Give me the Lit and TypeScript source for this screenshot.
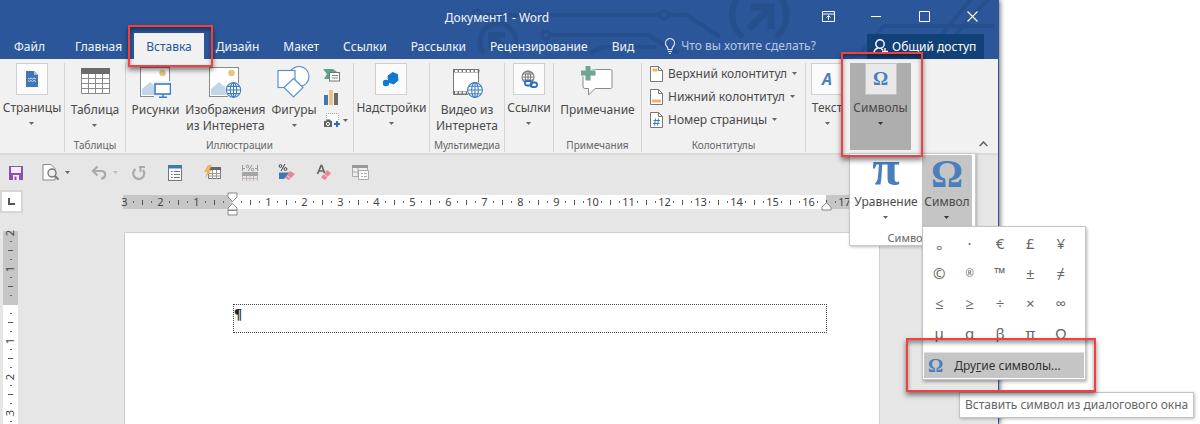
import { LitElement, html, svg, css } from "lit";
import { customElement } from "lit/decorators.js";

const globe = (x: number, y: number, r: number, c: string, fill = "#fff") => svg`
  <g transform="translate(${x} ${y})" fill="none" stroke=${c} stroke-width="1.1">
    <circle r=${r} fill=${fill}></circle>
    <ellipse rx=${r * 0.45} ry=${r}></ellipse>
    <path d="M${-r} 0H${r}M0 ${-r}V${r}M${-r * 0.85} ${-r * 0.5}H${r * 0.85}M${-r * 0.85} ${r * 0.5}H${r * 0.85}"></path>
  </g>`;

const photo = svg`
  <rect x="1.5" y="1.5" width="29" height="29" fill="#fff" stroke="#8a8a8a"></rect>
  <circle cx="23.500" cy="7" r="3.200" fill="#eac282"></circle>
  <path d="M3 29v-6l8-7 8 7v6z" fill="#c3d5e8"></path>`;

const pageShape = svg`<path d="M.5 .5H8.500L12.500 4.500V15.500H.5Z" fill="#fff" stroke="#777"></path><path d="M8.500 .5V4.500H12.500" fill="none" stroke="#777"></path>`;

const icon = (w: number, h: number, body: unknown) =>
  html`<svg class="ic" width=${w} height=${h} viewBox="0 0 ${w} ${h}" aria-hidden="true">${body}</svg>`;

const icons = {
  pages: icon(16, 18, svg`<path d="M2 1h8l4 4v12H2z" fill="#3f78b5"></path><path d="M10 1v4h4z" fill="#9fbfe0"></path><path d="M4 8l1.500 1L7 8l1.500 1L10 8l2 1M4 10.500l1.500 1 1.500-1 1.500 1 1.500-1 2 1" stroke="#cfe0f1" fill="none"></path>`),
  table: icon(32, 32, svg`<rect x="2" y="2" width="29" height="26" fill="#fff"></rect><path d="M2.500 2v25.500h28V2M2.500 12.500h28M2.500 17.500h28M2.500 22.500h28M9.500 7v21M16.500 7v21M23.500 7v21" fill="none" stroke="#8a8a8a"></path><rect x="2" y="2" width="29" height="6" fill="#6b6b6b"></rect>`),
  pictures: icon(32, 32, svg`${photo}<rect x="15" y="15" width="17" height="17" fill="#f1f1f1"></rect><rect x="16" y="18" width="15.500" height="10" fill="#fff" stroke="#3f7cbf" stroke-width="1.600"></rect><path d="M24 28v3M20 31.200h8" stroke="#3f7cbf" stroke-width="1.400"></path>`),
  online: icon(34, 32, svg`${photo}<circle cx="25.500" cy="24" r="8.500" fill="#f1f1f1"></circle>${globe(25.5, 24, 7.2, "#3f7cbf")}`),
  shapes: icon(34, 32, svg`<g fill="#fff" stroke="#5b92cd" stroke-width="1.200"><circle cx="22" cy="10.500" r="10"></circle><rect x="1" y="4.500" width="17" height="17"></rect><path d="M16.500 12.500l9.500 9-9.500 9.500-9.500-9.500z"></path></g>`),
  smartart: icon(18, 14, svg`<path d="M0 1h10l4 3-3 3H7v4H1l3-5z" fill="#5ba389"></path><rect x="6.500" y="4.500" width="10" height="8.500" fill="#fff" stroke="#777"></rect><path d="M9 7.500h6M9 10h6" stroke="#888"></path>`),
  chart: icon(18, 15, svg`<path d="M1 5h4v10H1z" fill="#3f78b5"></path><path d="M6 0h4v15H6z" fill="#eac282"></path><path d="M11 3h4v12h-4z" fill="#6b6b6b"></path>`),
  shot: icon(18, 15, svg`<path d="M3.500 7V.5h12V8" fill="#fafafa" stroke="#aaa" stroke-dasharray="1 1"></path><path d="M1 8h2l1-1.500h3L8 8h1v6H1z" fill="#606060"></path><circle cx="5" cy="11" r="1.600" fill="#606060" stroke="#fff"></circle><path d="M14 8v6M11 11h6" stroke="#2f6cb5" stroke-width="2"></path>`),
  addins: icon(18, 18, svg`<path d="M10.500 2.500l5 2 .5 6-4.500 3.500-5-2-.5-6z" fill="#0f78d0" stroke="#0f78d0" stroke-linejoin="round"></path><circle cx="4" cy="13" r="3.200" fill="#0f78d0"></circle>`),
  video: icon(32, 32, svg`<rect x="2.500" y="3.500" width="25" height="25" fill="#fff" stroke="#777"></rect><path d="M2.500 5h26M2.500 26.500h14" stroke="#777" stroke-width="3"></path><path d="M4 5h24M4 26.500h13" stroke="#fff" stroke-width="2" stroke-dasharray="2.600 1.400"></path><circle cx="24" cy="24" r="8.500" fill="#f1f1f1"></circle>${globe(24, 24, 7.4, "#3f7cbf")}`),
  links: icon(18, 18, svg`${globe(8, 7, 6, "#7a7a7a")}<g fill="none" stroke="#2f6fb8" stroke-width="1.800"><rect x="5" y="11" width="7" height="4.500" rx="2.200" fill="#fff"></rect><rect x="10.500" y="12.500" width="6.500" height="4.500" rx="2.200"></rect></g>`),
  comment: icon(34, 32, svg`<path d="M5 3.500h24.500q1.500 0 1.500 1.500v16q0 1.500-1.500 1.500H14l-6.500 6.500v-6.500H4q-2 0-2-2V6" fill="#fff" stroke="#8a8a8a"></path><path d="M7 0v14.500M0 7h14.500" stroke="#f1f1f1" stroke-width="7"></path><path d="M7 0v14.500M0 7h14.500" stroke="#6ea693" stroke-width="5"></path>`),
  top: icon(13, 16, svg`${pageShape}<path d="M2.500 2.500h5v3h-5z" fill="#eab56a"></path>`),
  bottom: icon(13, 16, svg`${pageShape}<path d="M2 10.500h9v3H2z" fill="#eab56a"></path>`),
  number: icon(13, 16, svg`${pageShape}<path d="M5.500 6.500l-1 7M8.500 6.500l-1 7M3.500 8.500h6.500M3 11.500h6.500" stroke="#3f7cbf" fill="none"></path>`),
  textA: html`<span class="glyph it">A</span>`,
  omega: html`<span class="glyph">Ω</span>`,
  save: icon(16, 16, svg`<path d="M1 1h14v14H1z" fill="#8a52ad"></path><path d="M3 2h10v6H3zM5 10h6v5H5z" fill="#f3edf7"></path><path d="M6.500 11.500h2V15h-2z" fill="#8a52ad"></path>`),
  preview: icon(18, 17, svg`<path d="M1 .5h8l4 4V16H1z" fill="#fff" stroke="#888"></path><circle cx="10" cy="9" r="4" fill="#eee" stroke="#777" stroke-width="1.400"></circle><path d="M13 12l3.500 3.500" stroke="#777" stroke-width="2"></path>`),
  undo: icon(17, 16, svg`<path d="M2 6h9q4 1 3 5-1 2.500-4 2.500" fill="none" stroke="#aaa" stroke-width="2.200"></path><path d="M6.500 1.500L2 6l4.500 4.500" fill="none" stroke="#aaa" stroke-width="2.200"></path>`),
  redo: icon(16, 16, svg`<path d="M4.500 4A5.500 5.500 0 1 0 12 5" fill="none" stroke="#aaa" stroke-width="2.200"></path><path d="M8 2h6M9.500 2v5" stroke="#aaa" stroke-width="2"></path>`),
  list: icon(15, 16, svg`<rect x=".5" y=".5" width="13" height="15" fill="#fff" stroke="#777"></rect><path d="M0 0h14v3.500H0z" fill="#3f78b5"></path><path d="M3 6.500h1.500M3 9.500h1.500M3 12.500h1.500M6 6.500h6M6 9.500h6M6 12.500h6" stroke="#777"></path>`),
  quick: icon(18, 16, svg`<path d="M4.500 2.500h12v11h-12z" fill="#fff" stroke="#777"></path><path d="M4 2h13v3H4z" fill="#666"></path><path d="M8.500 5v9M12.500 5v9M4 8.500h13M4 11h13" stroke="#999"></path><path d="M4 0h4L5.500 5H8L1 13 3 7H0z" fill="#ecb55e"></path>`),
  percent: icon(16, 18, svg`<g fill="none" stroke="#999"><path d="M10 1L6 7"></path><circle cx="5.500" cy="2.500" r="1.300"></circle><circle cx="10.500" cy="5.500" r="1.300"></circle><path d="M.5 1v6M15.500 1v6M1 4.500h2M13 4.500h2"></path></g><path d="M0 8h16v4H0z" fill="#a5a5a5"></path><path d="M.5 12v5M4.500 12v5M8 12v5M11.500 12v5M15.500 12v5M0 14.500h16" stroke="#c3b3be"></path>`),
  clearPct: icon(18, 17, svg`<g fill="none" stroke="#444"><path d="M7 0L3 7"></path><circle cx="2.500" cy="2" r="1.400"></circle><circle cx="7.500" cy="5" r="1.400"></circle></g><path d="M1 8.500h11l-6 6.500H1z" fill="#3f78b5"></path><path d="M12 7l5 3-6 6-4-2z" fill="#e8879a"></path><path d="M9 11.500l3.500 3" stroke="#fbd7de"></path>`),
  clearA: icon(16, 17, svg`<path d="M1.500 10L5 1.500h.8L8.500 9M3 7h5" fill="none" stroke="#666" stroke-width="1.700"></path><path d="M11 6l4 3-6 7-4-2.500z" fill="#e8879a"></path><path d="M8 10l3.500 3" stroke="#fbd7de"></path>`),
  form: icon(17, 17, svg`<path d="M.5 1.500h15v11H.5z" fill="#eee" stroke="#aaa"></path><path d="M0 1h16v3H0z" fill="#999"></path><path d="M1 8h6M6 4v8" stroke="#aaa"></path><path d="M6.500 6.500h10v9h-10z" fill="#fafafa" stroke="#aaa"></path><path d="M9 9.500h2M12 9.500h3M9 12.500h2M12 12.500h3" stroke="#aaa"></path>`),
};

const arrow = html`<svg class="arrow" width="5" height="3" viewBox="0 0 5 3" aria-hidden="true"><path d="M0 0h5L2.500 3z" fill="currentColor"></path></svg>`;

const RULER_UNIT = 4;
const rulerCells = (from: number, to: number) => {
  const cells: string[] = [];
  for (let i = from * RULER_UNIT; i <= to * RULER_UNIT; i++) {
    const rest = Math.abs(i % RULER_UNIT);
    cells.push(rest === 2 ? "|" : rest ? "·" : i === 0 ? "" : String(Math.abs(i / RULER_UNIT)));
  }
  return cells.map((c) =>
    c === "|" ? html`<i class="tick"></i>` : c === "·" ? html`<i class="dot"></i>` : html`<i class="num"><b>${c}</b></i>`);
};

const SYMBOLS = "ₒ·€£¥©®™±≠≤≥÷×∞μαβπΩ".split("");

@customElement("app-root")
export class AppRoot extends LitElement {
  static styles = css`
    :host { display: block; font: 12px/16px "Noto Sans", "Open Sans", sans-serif; color: #4a4a4a; background: #fff; height: 100vh; overflow: hidden; }
    * { box-sizing: border-box; }
    button, input { font: inherit; color: inherit; background: none; border: 0; padding: 0; margin: 0; }
    button { white-space: nowrap; }
    svg { display: block; flex: none; }
    .desktop { height: 100%; padding-right: 201px; }
    .window { position: relative; height: 100%; display: flex; flex-direction: column; background: #e6e6e6; border-right: 1px solid #2b579a; box-shadow: 1px 0 5px rgba(0, 0, 0, .6); }
    header { position: relative; background: #2b579a; color: #f2f5fa; height: 59px; }
    .circuit { position: absolute; top: 0; right: 0; width: 536px; height: 59px; }
    .titlebar { position: relative; display: flex; align-items: center; height: 33px; }
    .title { flex: 1; margin: 0; padding: 2px 0 0 190px; font: inherit; text-align: center; }
    .controls { display: flex; padding-right: 2px; }
    .controls button { width: 48px; height: 30px; display: grid; place-items: center; }
    .tabs { position: relative; display: flex; align-items: stretch; height: 26px; padding-left: 2px; }
    .tab { padding: 2px 12px 0; height: 26px; position: relative; }
    .tab.file { margin-right: 6px; }
    .tab.on { background: #f1f1f1; color: #2b579a; z-index: 3; }
    .tell { display: flex; align-items: center; gap: 5px; margin-left: 18px; flex: 1; min-width: 0; }
    .tell input { flex: 1; min-width: 0; outline: 0; }
    .tell input::placeholder { color: #b9c8e0; opacity: 1; }
    .share { display: flex; align-items: center; gap: 4px; flex: 0 0 117px; margin: 1px 14px 0 0; padding-left: 6px; background: #124078; color: #fff; }
    .mark { position: absolute; border: 2px solid #f43f3f; box-shadow: 0 3px 5px rgba(0, 0, 0, .5), inset 0 3px 4px rgba(0, 0, 0, .4); pointer-events: none; }
    .mark.tabmark { left: -6px; right: -9px; top: -8px; height: 42px; z-index: 4; }
    .mark.symmark { left: -9px; right: -12px; top: -11px; height: 105px; z-index: 6; }
    .mark.moremark { left: -18px; right: -12px; top: -15px; height: 54px; z-index: 6; }

    .ribbon { display: grid; grid-template-columns: 65px 61px 228px 76px 75px 49px 88px 164px 1fr; height: 96px; background: #f1f1f1; border-bottom: 2px solid #dadada; padding-top: 4px; }
    .group { display: flex; flex-direction: column; border-right: 1px solid #d5d5d5; margin-bottom: 1px; min-width: 0; }
    .items { flex: 1; display: flex; justify-content: center; gap: 6px; }
    .caption { font-size: 10px; line-height: 14px; text-align: center; color: #666; white-space: nowrap; }
    .big { display: flex; flex-direction: column; align-items: center; padding-top: 3px; gap: 4px; align-self: flex-start; }
    .big.boxed { padding-top: 0; gap: 5px; }
    .box { width: 32px; height: 32px; display: grid; place-items: center; background: #fbfbfb; border: 1px solid #d0d0d0; }
    .lbl { display: flex; flex-direction: column; align-items: center; }
    .lbl .arrow { margin-top: 6px; }
    .arrow { color: #666; }
    .glyph { font: bold 19px/24px "Liberation Serif", serif; color: #4a7fbc; }
    .glyph.it { font: italic bold 16px/24px "Noto Sans", sans-serif; }
    .minis { display: flex; flex-direction: column; }
    .minis button { display: flex; align-items: center; height: 23px; gap: 2px; }
    .rows { flex: 1; display: flex; flex-direction: column; align-items: flex-start; padding: 0 0 0 8px; margin-top: -1px; }
    .rows button { display: flex; align-items: center; gap: 5px; height: 23px; }
    .final { display: flex; height: 87px; padding-left: 5px; gap: 7px; }
    .textbtn { width: 32px; }
    .textbtn .boxed { width: 100%; }
    .symwrap { position: relative; width: 61px; background: #aeaeae; }
    .symwrap > .boxed { width: 100%; }
    .symwrap .box { background: #e9e9e9; border-color: #c6c6c6; }
    .symwrap > .boxed .arrow, .cell.on .arrow { color: #333; }
    .collapse { margin: auto 10px 0 auto; height: 12px; }

    .panel { position: absolute; left: -1px; top: 90px; width: 127px; height: 93px; background: #fff; border: 1px solid #c8c8c8; box-shadow: 1px 1px 3px rgba(0, 0, 0, .25); z-index: 5; padding-top: 1px; }
    .pair { display: flex; }
    .cell { height: 72px; flex: 0 0 72px; display: flex; flex-direction: column; align-items: center; }
    .cell.on { flex-basis: 50px; background: #c5c5c5; }
    .huge { font: bold 50px/26px "Liberation Serif", serif; color: #4a7fbc; height: 39px; }
    .huge.om { font-size: 40px; line-height: 38px; }
    .panel .caption { font-size: 11px; padding-top: 4px; }
    .menu { position: absolute; left: 72px; top: 72px; width: 164px; height: 154px; background: #fff; border: 1px solid #c4c4c4; box-shadow: 1px 2px 3px rgba(0, 0, 0, .3); }
    .grid { display: grid; grid-template-columns: repeat(5, 1fr); grid-auto-rows: 30px; height: 115px; overflow: hidden; padding: 1px 9px 0 1px; font-size: 15px; }
    .grid button { text-align: center; color: #666; }
    .grid .small { font-size: 10px; }
    .more { position: relative; margin: 10px 1px 1px 1px; border-top: 1px solid #e2e2e2; }
    .more button { display: flex; align-items: center; gap: 11px; width: 100%; height: 25px; padding-left: 4px; background: #c5c5c5; color: #333; }
    .tip { position: absolute; left: 36px; top: 165px; border: 1px solid #c4c4c4; background: #fff; padding: 4px 5px; white-space: nowrap; color: #666; box-shadow: 1px 1px 3px rgba(0, 0, 0, .25); }

    .qat { display: flex; align-items: center; height: 35px; padding-left: 8px; }
    .qat button { height: 24px; display: grid; place-items: center; }
    .qat .t { width: 37px; }
    .qat .n { width: 16px; }
    .qat .m { width: 24px; margin-left: 15px; }
    .qat .m + .n { width: 9px; }
    .faint .arrow { color: #bbb; }
    .rulerrow { display: flex; height: 24px; }
    .corner { flex: none; width: 23px; height: 23px; border: 2px solid #d6d6d6; background: #fff; display: grid; place-items: center; margin-right: 97px; }
    .corner i { width: 7px; height: 7px; border: solid #555; border-width: 0 0 2px 2px; }
    .ruler { position: relative; flex: 0 1 760px; display: flex; height: 14px; margin-top: 5px; background: linear-gradient(to right, transparent 3px, #c6c6c6 3px 112px, #fff 112px 706px, #c6c6c6 706px); }
    .ruler i, .vruler i { flex: none; width: 9px; height: 100%; display: flex; align-items: center; justify-content: center; font-style: normal; }
    .ruler b, .vruler b { font: 11px/14px "Noto Sans", sans-serif; color: #444; }
    .dot::before { content: ""; width: 1px; height: 2px; background: #666; }
    .tick::before { content: ""; width: 1px; height: 5px; background: #555; }
    .knob { position: absolute; }
    .knob.l { left: 107px; top: -3px; }
    .knob.r { left: 701px; top: 7px; }
    .work { flex: 1; min-height: 0; display: flex; overflow: hidden; padding-top: 14px; }
    .vruler { width: 15px; margin: 0 106px 0 3px; overflow: hidden; background: linear-gradient(to bottom, transparent 3px, #c6c6c6 3px 77px, #fff 77px); }
    .vruler i { width: 15px; height: 9px; }
    .vruler b { transform: rotate(-90deg); }
    .vruler .dot::before { width: 2px; height: 1px; }
    .vruler .tick::before { width: 5px; height: 1px; }
    .sheet { flex: 0 1 756px; margin-top: 4px; background: #fff; border: solid #cfcfcf; border-width: 1px 1px 0; padding: 71px 52px 0 108px; }
    .para { height: 29px; margin: 0; border: 1px dotted #444; font: bold 15px/18px "Liberation Serif", serif; color: #222; }
  `;

  private big(ic: unknown, lines: string[], drop = false, boxed = false) {
    return html`<button class="big ${boxed ? "boxed" : ""}">
      ${boxed ? html`<span class="box">${ic}</span>` : ic}
      <span class="lbl">${lines.map((l) => html`<span>${l}</span>`)}${drop ? arrow : ""}</span>
    </button>`;
  }

  private group(caption: string, body: unknown) {
    return html`<section class="group"><div class="items">${body}</div><div class="caption">${caption}</div></section>`;
  }

  private header() {
    return html`<header>
      <svg class="circuit" viewBox="0 0 536 59" aria-hidden="true">
        <g fill="none" stroke="#254f8d" stroke-width="4">
          <circle cx="15" cy="14" r="4" stroke-width="3"></circle><path d="M20 15H197M206 15H225L258 37"></path>
          <circle cx="202" cy="15" r="4" stroke-width="3"></circle>
          <circle cx="84" cy="35" r="4" stroke-width="3"></circle><path d="M89 35H186L216 53M128 53L141 47H195"></path>
          <path d="M22 53A18 18 0 1 1 50 53" stroke-width="5"></path><path d="M29 50V35H43M30 36L46 51" stroke-width="6"></path>
          <path d="M281 37A28 28 0 0 1 282 -8M312 -8A28 28 0 0 1 314 37" stroke-width="6"></path>
          <path d="M289 7H309V29M308 8L287 29" stroke-width="7"></path>
          <path d="M400 51L422 26H532M480 34L510 -2M494 34L527 -2"></path>
        </g>
      </svg>
      <div class="titlebar">
        <h1 class="title">Документ1 - Word</h1>
        <div class="controls">
          <button aria-label="Параметры ленты">${icon(13, 11, svg`<path d="M.5 .5h12v10H.5zM.5 3h12M6.500 9V5M4.500 6.500l2-2 2 2" fill="none" stroke="#fff"></path>`)}</button>
          <button aria-label="Свернуть">${icon(10, 11, svg`<path d="M0 5.500h10" stroke="#fff"></path>`)}</button>
          <button aria-label="Развернуть">${icon(11, 11, svg`<path d="M.5 .5h10v10H.5z" fill="none" stroke="#fff"></path>`)}</button>
          <button aria-label="Закрыть">${icon(11, 11, svg`<path d="M.5 .5l10 10M10.500 .5l-10 10" stroke="#fff" stroke-width="1.200"></path>`)}</button>
        </div>
      </div>
      <nav class="tabs">
        <button class="tab file">Файл</button>
        <button class="tab">Главная</button>
        <button class="tab on">Вставка<span class="mark tabmark"></span></button>
        ${["Дизайн", "Макет", "Ссылки", "Рассылки", "Рецензирование", "Вид"].map((t) => html`<button class="tab">${t}</button>`)}
        <label class="tell">
          ${icon(12, 16, svg`<path d="M4 11.500Q4 9.500 2.500 8A4.500 4.500 0 1 1 9.500 8Q8 9.500 8 11.500zM4 13.500h4M5 15.500h2" fill="none" stroke="#dfe7f3" stroke-width="1.200"></path>`)}
          <input type="text" aria-label="Что вы хотите сделать?" placeholder="Что вы хотите сделать?">
        </label>
        <button class="share">${icon(15, 16, svg`<g fill="none" stroke="#fff" stroke-width="1.400"><circle cx="7" cy="5" r="4.200"></circle><path d="M.7 15Q1 10 5 9M8 9.500L10 11M12 9v6M9 12.500h6"></path></g>`)}Общий доступ</button>
      </nav>
    </header>`;
  }

  private symbols() {
    return html`<div class="symwrap">
      ${this.big(icons.omega, ["Символы"], true, true)}
      <div class="panel">
        <div class="pair">
          <button class="cell"><span class="huge">π</span><span class="lbl"><span>Уравнение</span>${arrow}</span></button>
          <button class="cell on"><span class="huge om">Ω</span><span class="lbl"><span>Символ</span>${arrow}</span></button>
        </div>
        <div class="caption">Символы</div>
        <div class="menu">
          <div class="grid">${SYMBOLS.map((s) => html`<button class=${s === "®" ? "small" : ""}>${s}</button>`)}</div>
          <div class="more">
            <button>${icons.omega}<span>Дру<u>г</u>ие символы...</span></button>
            <span class="mark moremark"></span>
          </div>
          <div class="tip" role="tooltip">Вставить символ из диалогового окна</div>
        </div>
      </div>
      <span class="mark symmark"></span>
    </div>`;
  }

  private ribbon() {
    return html`<div class="ribbon">
      ${this.group("", this.big(icons.pages, ["Страницы"], true, true))}
      ${this.group("Таблицы", this.big(icons.table, ["Таблица"], true))}
      ${this.group("Иллюстрации", html`
        ${this.big(icons.pictures, ["Рисунки"])}
        ${this.big(icons.online, ["Изображения", "из Интернета"])}
        ${this.big(icons.shapes, ["Фигуры"], true)}
        <div class="minis">
          <button aria-label="SmartArt">${icons.smartart}</button>
          <button aria-label="Диаграмма">${icons.chart}</button>
          <button aria-label="Снимок">${icons.shot}${arrow}</button>
        </div>`)}
      ${this.group("", this.big(icons.addins, ["Надстройки"], true, true))}
      ${this.group("Мультимедиа", this.big(icons.video, ["Видео из", "Интернета"]))}
      ${this.group("", this.big(icons.links, ["Ссылки"], true, true))}
      ${this.group("Примечания", this.big(icons.comment, ["Примечание"]))}
      ${this.group("Колонтитулы", html`<div class="rows">
        <button>${icons.top}<span>Верхний колонтитул</span>${arrow}</button>
        <button>${icons.bottom}<span>Нижний колонтитул</span>${arrow}</button>
        <button>${icons.number}<span>Номер страницы</span>${arrow}</button>
      </div>`)}
      <section class="final">
        <div class="textbtn">${this.big(icons.textA, ["Текст"], true, true)}</div>
        ${this.symbols()}
        <button class="collapse" aria-label="Свернуть ленту">${icon(9, 6, svg`<path d="M.7 5l3.800-4 3.800 4" fill="none" stroke="#666" stroke-width="1.600"></path>`)}</button>
      </section>
    </div>`;
  }

  render() {
    return html`<div class="desktop"><div class="window">
      ${this.header()}
      ${this.ribbon()}
      <div class="qat">
        <button class="n" aria-label="Сохранить">${icons.save}</button>
        <button class="m" aria-label="Просмотр">${icons.preview}</button>
        <button class="n" aria-label="Ещё">${arrow}</button>
        <button class="m faint" aria-label="Отменить">${icons.undo}</button>
        <button class="n faint" aria-label="Список отмены">${arrow}</button>
        <button class="t" aria-label="Повторить">${icons.redo}</button>
        <button class="t" aria-label="Список">${icons.list}</button>
        <button class="t" aria-label="Экспресс-таблица">${icons.quick}</button>
        <button class="t" aria-label="Ширина">${icons.percent}</button>
        <button class="t" aria-label="Очистить проценты">${icons.clearPct}</button>
        <button class="t" aria-label="Очистить формат">${icons.clearA}</button>
        <button class="t" aria-label="Форма">${icons.form}</button>
      </div>
      <div class="rulerrow">
        <div class="corner"><i></i></div>
        <div class="ruler">${rulerCells(-3, 17)}
          <svg class="knob l" width="11" height="25" viewBox="0 0 11 25"><path d="M1 1h9v4L5.500 9.500 1 5zM1 16L5.500 11.500 10 16v2H1zM1 18.500h9V23H1z" fill="#fff" stroke="#888"></path></svg>
          <svg class="knob r" width="11" height="9" viewBox="0 0 11 9"><path d="M1 5L5.500 .7 10 5v3H1z" fill="#fff" stroke="#888"></path></svg>
        </div>
      </div>
      <div class="work">
        <div class="vruler">${rulerCells(-2, 4)}</div>
        <main class="sheet"><p class="para">¶</p></main>
      </div>
    </div></div>`;
  }
}
